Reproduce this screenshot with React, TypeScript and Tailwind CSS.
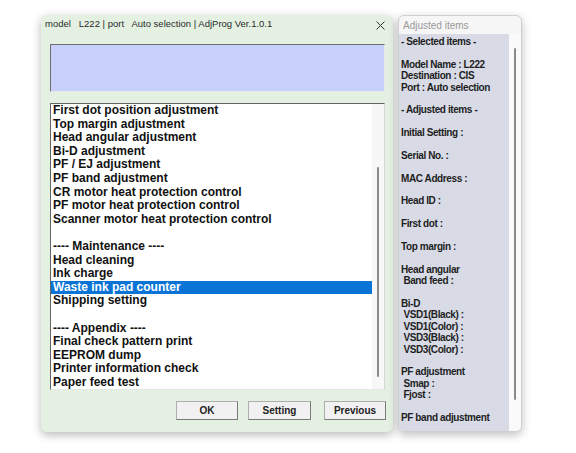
import React from 'react';

const font = { fontFamily: '"Liberation Sans", Arial, sans-serif' };

const menuItems = [
  'First dot position adjustment',
  'Top margin adjustment',
  'Head angular adjustment',
  'Bi-D adjustment',
  'PF / EJ adjustment',
  'PF band adjustment',
  'CR motor heat protection control',
  'PF motor heat protection control',
  'Scanner motor heat protection control',
  '',
  '---- Maintenance ----',
  'Head cleaning',
  'Ink charge',
  'Waste ink pad counter',
  'Shipping setting',
  '',
  '---- Appendix ----',
  'Final check pattern print',
  'EEPROM dump',
  'Printer information check',
  'Paper feed test',
];

const adjustedLines = [
  '- Selected items -',
  '',
  'Model Name : L222',
  'Destination : CIS',
  'Port : Auto selection',
  '',
  '- Adjusted items -',
  '',
  'Initial Setting :',
  '',
  'Serial No. :',
  '',
  'MAC Address :',
  '',
  'Head ID :',
  '',
  'First dot :',
  '',
  'Top margin :',
  '',
  'Head angular',
  ' Band feed :',
  '',
  'Bi-D',
  ' VSD1(Black) :',
  ' VSD1(Color) :',
  ' VSD3(Black) :',
  ' VSD3(Color) :',
  '',
  'PF adjustment',
  ' Smap :',
  ' Fjost :',
  '',
  'PF band adjustment',
];

function DialogButton({ label, width }: { label: string; width: string }) {
  return (
    <button
      className={`${width} h-[19px] bg-[#f1f1f1] border border-[#adadad] border-b-[#7a7a7a] border-r-[#7a7a7a] text-[10px] font-bold text-[#222] leading-none`}
    >
      {label}
    </button>
  );
}

export default function App() {
  const selected = 'Waste ink pad counter';

  return (
    <div className="w-[576px] h-[453px] bg-white overflow-hidden" style={font}>
      <div className="flex items-start pt-[15px] pl-[41px] gap-[5px]">
        {/* Main AdjProg window */}
        <div className="w-[352px] h-[417px] bg-[#e4f1e2] rounded-[6px] shadow-[0_3px_10px_rgba(0,0,0,0.28)] flex flex-col">
          <div className="h-[19px] flex items-center justify-between pl-[4px] pr-[8px]">
            <span className="text-[9.5px] text-[#2a2a2a] whitespace-pre">
              {'model   L222 | port   Auto selection | AdjProg Ver.1.0.1'}
            </span>
            <svg width="9" height="9" viewBox="0 0 9 9" className="mt-[1px]">
              <path d="M0.5 0.5 L8.5 8.5 M8.5 0.5 L0.5 8.5" stroke="#333" strokeWidth="1" />
            </svg>
          </div>

          <div className="mt-[10px] ml-[9px] w-[335px] h-[48px] bg-[#c6d0fb] border border-t-[#6e6e6e] border-l-[#6e6e6e] border-r-[#e8e8e8] border-b-[#e8e8e8]" />

          <div className="mt-[11px] ml-[9px] w-[335px] h-[287px] bg-white border border-t-[#646464] border-l-[#646464] border-r-[#d6d6d6] border-b-[#e6e6e6] flex">
            <div className="w-[321px]">
              {menuItems.map((item, i) => {
                const isSel = item === selected;
                return (
                  <div
                    key={i}
                    className={`h-[13.6px] pl-[2px] text-[12px] leading-[13.6px] font-bold whitespace-pre ${
                      isSel ? 'bg-[#0a74d6] text-white' : 'text-[#111]'
                    }`}
                  >
                    {item || ' '}
                  </div>
                );
              })}
            </div>
            <div className="flex-1 bg-[#f7f7f7] flex justify-center pt-[63px]">
              <div className="w-[2px] h-[210px] bg-[#8a8a8a] rounded-full" />
            </div>
          </div>

          <div className="mt-[11px] flex justify-end pr-[7px]">
            <DialogButton label="OK" width="w-[62px]" />
            <div className="w-[10px]" />
            <DialogButton label="Setting" width="w-[63px]" />
            <div className="w-[13px]" />
            <DialogButton label="Previous" width="w-[62px]" />
          </div>
        </div>

        {/* Adjusted items window */}
        <div className="w-[124px] h-[417px] bg-[#f6f6f6] rounded-[6px] shadow-[0_3px_10px_rgba(0,0,0,0.25)] border border-[#cfcfcf] flex flex-col overflow-hidden">
          <div className="h-[18px] flex items-center pl-[4px]">
            <span className="text-[10px] text-[#9a9a9a]">Adjusted items</span>
          </div>
          <div className="flex-1 flex">
            <div className="w-[110px] bg-[#d8dbe6] pt-[2px] pl-[2px]">
              {adjustedLines.map((line, i) => (
                <div
                  key={i}
                  className="h-[11.4px] text-[10px] leading-[11.4px] font-bold tracking-[-0.4px] text-[#1e1e1e] whitespace-pre"
                >
                  {line || ' '}
                </div>
              ))}
            </div>
            <div className="flex-1 bg-[#fafafa] flex justify-center pt-[14px]">
              <div className="w-[2px] h-[352px] bg-[#8a8a8a] rounded-full" />
            </div>
          </div>
        </div>
      </div>
    </div>
  );
}
